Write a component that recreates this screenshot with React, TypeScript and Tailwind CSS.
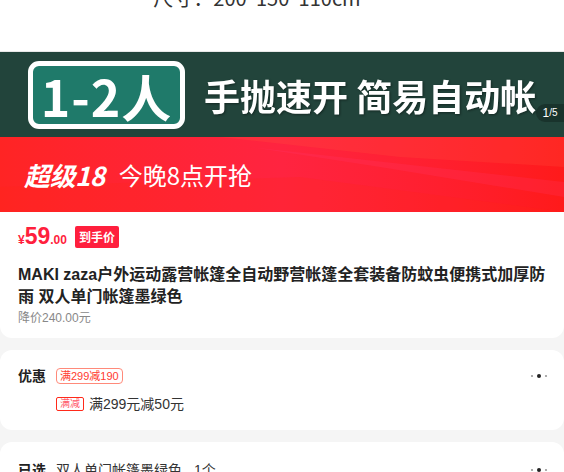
import React from "react";

const font = { fontFamily: '"Liberation Sans", "Noto Sans CJK SC", sans-serif' };
const cjk = { fontFamily: '"Noto Sans CJK SC", "Noto Sans", sans-serif' };

function Dots() {
  return (
    <svg width="18" height="6" viewBox="0 0 18 6">
      <circle cx="2" cy="3" r="1.1" fill="#999" />
      <circle cx="9" cy="3" r="2" fill="#222" />
      <circle cx="16" cy="3" r="1.1" fill="#999" />
    </svg>
  );
}

export default function App() {
  return (
    <div className="w-[564px] h-[472px] overflow-hidden bg-[#f5f5f5]" style={font}>
      {/* top image remainder */}
      <div className="h-[52px] bg-white overflow-hidden flex justify-center border-b border-[#e8e8e8]">
        <div className="mt-[-13px] ml-[-50px] text-[20px] text-[#333] leading-[22px] whitespace-nowrap" style={cjk}>
          尺寸：200*150*110cm
        </div>
      </div>

      {/* green banner */}
      <div className="relative h-[85px] bg-[#22443b] flex items-center pl-[28px]">
        <div className="w-[157px] h-[68px] rounded-[11px] border-[5px] border-white bg-[#1f7a6a] flex items-center justify-center">
          <span className="text-white font-bold text-[50px] leading-none tracking-[1px]" style={cjk}>
            1-2人
          </span>
        </div>
        <div className="ml-[19px] text-white font-bold text-[36px] leading-none whitespace-nowrap drop-shadow-[1px_1px_1px_rgba(0,0,0,0.4)]" style={cjk}>
          手抛速开 简易自动帐
        </div>
        <div className="absolute right-0 top-[52px] h-[18px] w-[28px] rounded-l-full bg-[rgba(0,0,0,0.25)] flex items-center justify-center text-white text-[10px] leading-none">
          <span className="text-[12px]">1</span>/5
        </div>
      </div>

      {/* red banner */}
      <div className="relative h-[75px] overflow-hidden bg-gradient-to-r from-[#ff2424] via-[#ff2440] to-[#ff1a1a] flex items-center pl-[24px]">
        <svg className="absolute inset-0" width="564" height="75" viewBox="0 0 564 75">
          <polygon points="220,0 564,0 564,30 400,20" fill="rgba(255,80,60,0.25)" />
          <polygon points="250,10 564,45 564,60 380,30" fill="rgba(255,60,120,0.18)" />
          <polygon points="0,50 300,40 564,75 0,75" fill="rgba(255,40,20,0.2)" />
        </svg>
        <span className="relative text-white font-bold italic text-[26px] leading-none tracking-[-0.5px]" style={cjk}>
          超级18
        </span>
        <span className="relative ml-[14px] text-white text-[24px] leading-none" style={cjk}>
          今晚8点开抢
        </span>
      </div>

      {/* price card */}
      <div className="bg-white rounded-b-[12px] px-[18px] pt-[14px] pb-[12px]">
        <div className="flex items-center h-[22px]">
          <div className="flex items-baseline text-[#ff1f3d] font-bold">
            <span className="text-[12px]">¥</span>
            <span className="text-[23px] leading-none">59</span>
            <span className="text-[12px]">.00</span>
          </div>
          <span className="ml-[8px] h-[22px] px-[4px] rounded-[2px] bg-[#ff1f3d] text-white text-[12px] font-bold flex items-center" style={cjk}>
            到手价
          </span>
        </div>
        <div className="mt-[16px] text-[16px] leading-[22px] font-bold text-[#222]">
          MAKI zaza户外运动露营帐篷全自动野营帐篷全套装备防蚊虫便携式加厚防雨 双人单门帐篷墨绿色
        </div>
        <div className="mt-[2px] text-[12px] leading-[16px] text-[#888]">降价240.00元</div>
      </div>

      {/* promo card */}
      <div className="mt-[12px] bg-white rounded-[12px] h-[80px] px-[18px] pt-[18px]">
        <div className="flex items-center h-[16px]">
          <span className="w-[38px] text-[14px] font-bold text-[#222]">优惠</span>
          <span className="h-[16px] px-[3px] border border-[#ff8a7a] rounded-[4px] text-[11px] text-[#ff3b30] flex items-center leading-none">
            满299减190
          </span>
          <span className="ml-auto mr-[-2px]">
            <Dots />
          </span>
        </div>
        <div className="flex items-center mt-[13px] ml-[38px] h-[14px]">
          <span className="h-[14px] px-[3px] border border-[#ff2a1a] rounded-[2px] text-[10px] text-[#ff5a6a] flex items-center leading-none">
            满减
          </span>
          <span className="ml-[5px] text-[14px] text-[#333]">满299元减50元</span>
        </div>
      </div>

      {/* selected card */}
      <div className="mt-[12px] bg-white rounded-[12px] h-[80px] px-[18px] pt-[20px]">
        <div className="flex items-center h-[16px]">
          <span className="w-[38px] text-[14px] font-bold text-[#222]">已选</span>
          <span className="text-[14px] text-[#333]">双人单门帐篷墨绿色</span>
          <span className="ml-[12px] text-[14px] text-[#333]">1个</span>
          <span className="ml-auto mr-[-2px]">
            <Dots />
          </span>
        </div>
      </div>
    </div>
  );
}
